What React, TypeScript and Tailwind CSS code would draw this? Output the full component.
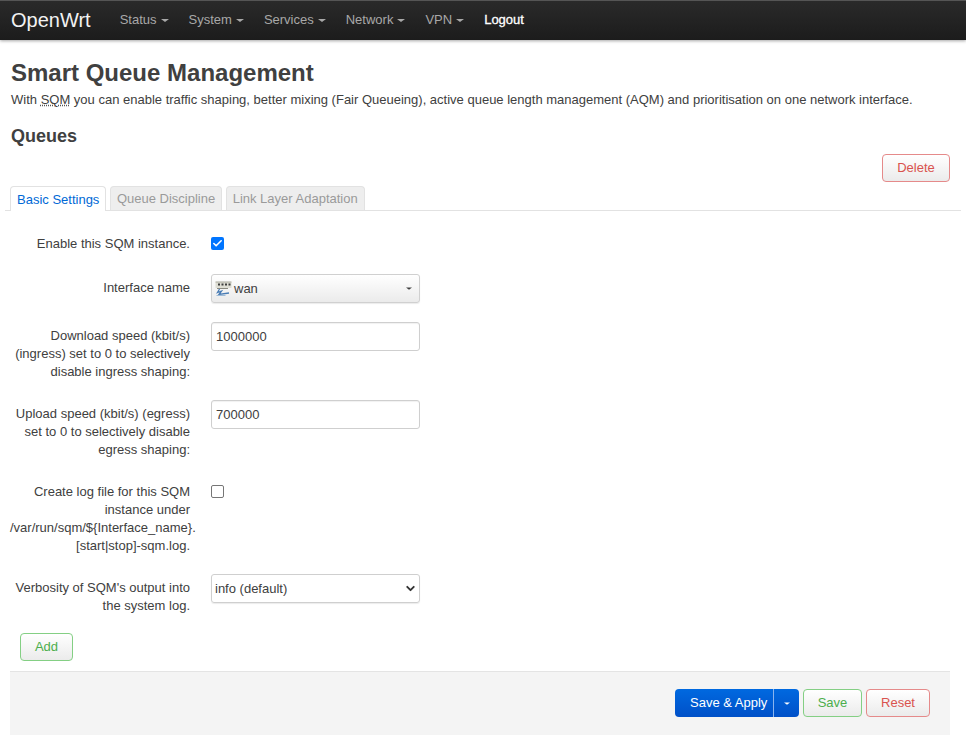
import { Check, ChevronDown } from 'lucide-react';

const navItems = ['Status', 'System', 'Services', 'Network', 'VPN'];

const Caret = ({ className }: { className: string }) => (
  <span className={`inline-block border-x-[4px] border-t-[3.5px] border-x-transparent ${className}`} />
);

const btnGradient = 'bg-gradient-to-b from-white to-[#ebebeb]';

const WanIcon = () => (
  <svg width="17" height="17" viewBox="0 0 17 17" className="mr-[2px]">
    <rect x="0.5" y="2" width="16" height="6" fill="#deded4" />
    <path d="M0.5 2h16" stroke="#a8a89c" strokeWidth="1" />
    <path d="M3 3.5h2v2H3zM6.5 3.5h2v2h-2zM10 3.5h2v2h-2zM13.5 3.5h2v2h-2z" fill="#3c3c3c" />
    <path d="M2 8.5h11" stroke="#8a8a80" strokeWidth="1" />
    <path d="M4.5 9l-2 3.5 4-1.5-2.5 3.5 10-1.5" fill="none" stroke="#4a7db5" strokeWidth="1.3" />
    <path d="M1.5 15.5h9" stroke="#9dbbd8" strokeWidth="1" />
  </svg>
);

const Row = ({ label, className, children }: { label: React.ReactNode; className: string; children: React.ReactNode }) => (
  <div className={`flex items-start ${className}`}>
    <label className="w-[180px] shrink-0 text-right text-[13px] leading-[18px] text-[#404040]">{label}</label>
    <div className="ml-[21px]">{children}</div>
  </div>
);

const App = () => {
  return (
    <div className="min-h-[748px] bg-white font-['Liberation_Sans',Arial,sans-serif] text-[#404040]">
      <header className="flex h-10 items-center border-t border-t-[#555] bg-gradient-to-b from-[#2a2a2a] to-[#1c1c1c] pb-[2px] pl-[11px] shadow-[0_1px_3px_rgba(0,0,0,0.35)]">
        <span className="mr-[29px] text-[20px] leading-none text-[#f2f2f2]">OpenWrt</span>
        {navItems.map((item) => (
          <span key={item} className="mr-[20px] flex items-center gap-[4px] text-[13px] text-[#a8a8a8]">
            {item}
            <Caret className="mt-[1px] border-t-[#a8a8a8]" />
          </span>
        ))}
        <span className="text-[13px] text-white [-webkit-text-stroke:0.3px_white]">Logout</span>
      </header>

      <main className="px-[10px]">
        <h1 className="ml-px mt-[19px] text-[24px] font-bold leading-[28px]">Smart Queue Management</h1>
        <p className="ml-px mt-[4px] whitespace-nowrap text-[13px] leading-[18px]">
          With <abbr className="underline decoration-dotted decoration-[#555]">SQM</abbr> you can enable traffic shaping, better mixing (Fair Queueing), active queue length management (AQM) and prioritisation on one network interface.
        </p>
        <h2 className="ml-px mt-[17px] text-[18px] font-bold leading-[20px]">Queues</h2>

        <div className="mt-[8px] flex justify-end pr-[6px]">
          <button className={`h-[28px] w-[68px] rounded-[4px] border-[1.5px] border-[#e58a8a] text-[13px] text-[#d9534f] ${btnGradient}`}>Delete</button>
        </div>

        <div className="-mx-[5px] mt-[4px] flex h-[25px] gap-[3.5px] border-b border-[#e2e2e2] pl-[5px] pr-[1px]">
          <div className="-mb-px flex h-[25px] items-center rounded-t-[4px] border border-b-0 border-[#e2e2e2] bg-white px-[6px] pt-px text-[13px] text-[#0069d6]">Basic Settings</div>
          <div className="flex h-[24px] items-center rounded-t-[4px] border border-b-0 border-[#e2e2e2] bg-[#eeeeee] px-[6px] pt-px text-[13px] text-[#9a9a9a]">Queue Discipline</div>
          <div className="flex h-[24px] items-center rounded-t-[4px] border border-b-0 border-[#e2e2e2] bg-[#eeeeee] px-[6px] pt-px text-[13px] text-[#9a9a9a]">Link Layer Adaptation</div>
        </div>

        <Row label="Enable this SQM instance." className="mt-[24px]">
          <span className="mt-[2px] flex h-[13px] w-[13px] items-center justify-center rounded-[2px] bg-[#0075ff]">
            <Check size={11} strokeWidth={3.5} className="text-white" />
          </span>
        </Row>

        <Row label="Interface name" className="mt-[26px]">
          <div className={`-mt-[5px] flex h-[29px] w-[209px] items-center rounded-[3px] border border-[#d0d0d0] pl-[3px] pr-[6px] text-[13px] shadow-[0_1px_1px_rgba(0,0,0,0.08)] ${btnGradient}`}>
            <WanIcon />
            <span>wan</span>
            <Caret className="ml-auto scale-75 border-t-[#404040]" />
          </div>
        </Row>

        <Row
          className="mt-[24px]"
          label={<>Download speed (kbit/s)<br />(ingress) set to 0 to selectively<br />disable ingress shaping:</>}
        >
          <div className="-mt-[5px] flex h-[29px] w-[209px] items-center rounded-[3px] border border-[#cfcfcf] px-[4px] text-[13px] shadow-[inset_0_1px_1px_rgba(0,0,0,0.06)]">1000000</div>
        </Row>

        <Row
          className="mt-[24px]"
          label={<>Upload speed (kbit/s) (egress)<br />set to 0 to selectively disable<br />egress shaping:</>}
        >
          <div className="-mt-[5px] flex h-[29px] w-[209px] items-center rounded-[3px] border border-[#cfcfcf] px-[4px] text-[13px] shadow-[inset_0_1px_1px_rgba(0,0,0,0.06)]">700000</div>
        </Row>

        <Row
          className="mt-[24px]"
          label={<>Create log file for this SQM<br />instance under<br />/var/run/sqm/${'{'}Interface_name{'}'}.<br />[start|stop]-sqm.log.</>}
        >
          <span className="mt-[2px] block h-[13px] w-[13px] rounded-[2px] border border-[#767676] bg-white" />
        </Row>

        <Row
          className="mt-[24px]"
          label={<>Verbosity of SQM's output into<br />the system log.</>}
        >
          <div className="-mt-[5px] flex h-[29px] w-[209px] items-center justify-between rounded-[3px] border border-[#cfcfcf] pl-[3px] pr-[2px] text-[13px] shadow-[0_1px_1px_rgba(0,0,0,0.08)]">
            <span>info (default)</span>
            <ChevronDown size={13} strokeWidth={3.5} className="text-[#333]" />
          </div>
        </Row>

        <button className={`ml-[10px] mt-[18px] block h-[28px] w-[53px] rounded-[4px] border-[1.5px] border-[#84cf84] text-[13px] text-[#4cae4c] ${btnGradient}`}>Add</button>

        <footer className="mr-[6px] mt-[10px] flex h-[64px] items-center justify-end gap-[4px] border-t border-[#e4e4e4] bg-[#f4f4f4] pb-px pr-[20px]">
          <div className="flex h-[28px] w-[124px] items-center rounded-[4px] bg-gradient-to-b from-[#0069e0] to-[#0050c8] text-[13px] text-white">
            <span className="w-[98px] whitespace-nowrap pl-[15px]">Save &amp; Apply</span>
            <span className="flex h-full flex-1 items-center justify-center border-l border-[#8ab4ee]">
              <Caret className="scale-75 border-t-white" />
            </span>
          </div>
          <button className={`h-[28px] w-[59px] rounded-[4px] border-[1.5px] border-[#84cf84] text-[13px] text-[#4cae4c] ${btnGradient}`}>Save</button>
          <button className={`h-[28px] w-[64px] rounded-[4px] border-[1.5px] border-[#e58a8a] text-[13px] text-[#d9534f] ${btnGradient}`}>Reset</button>
        </footer>
      </main>
    </div>
  );
};

export default App;
